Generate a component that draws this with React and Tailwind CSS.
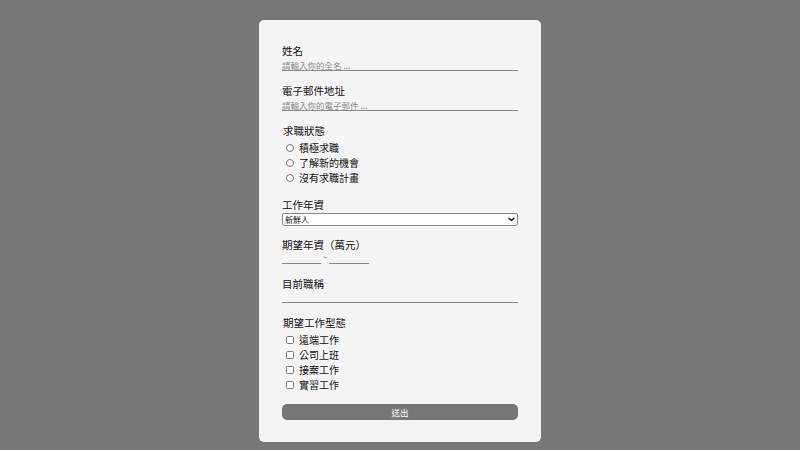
import React from 'react';

const font = { fontFamily: '"Noto Sans CJK TC", "Noto Sans", sans-serif' };

const statuses = ['積極求職', '了解新的機會', '沒有求職計畫'];
const types = ['遠端工作', '公司上班', '接案工作', '實習工作'];

const Label = ({ children, className = '' }) => (
  <div className={`h-[16px] text-[10.5px] leading-[16px] text-[#111] ${className}`}>{children}</div>
);

const LineInput = ({ placeholder, className = '' }) => (
  <input
    type="text"
    placeholder={placeholder}
    className={`block border-0 border-b border-[#888] bg-transparent p-0 text-[8.5px] leading-[11px] text-[#333] outline-none placeholder:text-[#8a8a8a] ${className}`}
  />
);

export default function App() {
  return (
    <div className="min-h-[450px] w-full bg-[#777777] pt-[20px]" style={font}>
      <form className="mx-auto flex w-[282px] flex-col rounded-[5px] bg-[#f4f4f4] px-[23px] pt-[23px] pb-[22px]">
        <div>
          <Label>姓名</Label>
          <LineInput placeholder="請輸入你的全名 ..." className="h-[12px] w-full" />
        </div>

        <div className="mt-[12px]">
          <Label>電子郵件地址</Label>
          <LineInput placeholder="請輸入你的電子郵件 ..." className="h-[12px] w-full" />
        </div>

        <div className="mt-[12px]">
          <Label className="pl-[1px]">求職狀態</Label>
          <div className="flex flex-col pt-[1px] pl-[4px]">
            {statuses.map((s) => (
              <label key={s} className="flex h-[15px] items-center gap-[5px] text-[10px] text-[#111]">
                <input
                  type="radio"
                  name="status"
                  className="m-0 h-[8px] w-[8px] shrink-0 appearance-none rounded-full border border-[#777] bg-white"
                />
                {s}
              </label>
            ))}
          </div>
        </div>

        <div className="mt-[12px]">
          <Label>工作年資</Label>
          <div className="relative">
            <select className="block h-[13px] w-full appearance-none rounded-[2px] border border-[#888] bg-white py-0 pr-[12px] pl-[2px] text-[8px] leading-[11px] text-[#111] outline-none">
              <option>新鮮人</option>
              <option>1-3 年</option>
              <option>3-5 年</option>
              <option>5 年以上</option>
            </select>
            <svg
              className="pointer-events-none absolute top-[4px] right-[3px] h-[5px] w-[7px]"
              viewBox="0 0 7 5"
              fill="none"
            >
              <path d="M1 1.2 L3.5 3.6 L6 1.2" stroke="#111" strokeWidth="1.4" strokeLinecap="round" strokeLinejoin="round" />
            </svg>
          </div>
        </div>

        <div className="mt-[11px]">
          <Label>期望年資（萬元）</Label>
          <div className="flex items-end">
            <LineInput className="h-[11px] w-[39px]" />
            <span className="mx-[1px] mb-[2px] w-[6px] text-center text-[7px] leading-[9px] text-[#555]">~</span>
            <LineInput className="h-[11px] w-[40px]" />
          </div>
        </div>

        <div className="mt-[12px]">
          <Label>目前職稱</Label>
          <LineInput className="h-[11px] w-full" />
        </div>

        <div className="mt-[12px]">
          <Label className="pl-[1px]">期望工作型態</Label>
          <div className="flex flex-col pt-[1px] pl-[4px]">
            {types.map((t) => (
              <label key={t} className="flex h-[15px] items-center gap-[5px] text-[10px] text-[#111]">
                <input
                  type="checkbox"
                  className="m-0 h-[8px] w-[8px] shrink-0 appearance-none rounded-[1.5px] border border-[#777] bg-white"
                />
                {t}
              </label>
            ))}
          </div>
        </div>

        <button
          type="button"
          className="mt-[12px] h-[16px] w-full rounded-[5px] bg-[#777777] text-[8.5px] leading-[16px] text-white"
        >
          送出
        </button>
      </form>
    </div>
  );
}
